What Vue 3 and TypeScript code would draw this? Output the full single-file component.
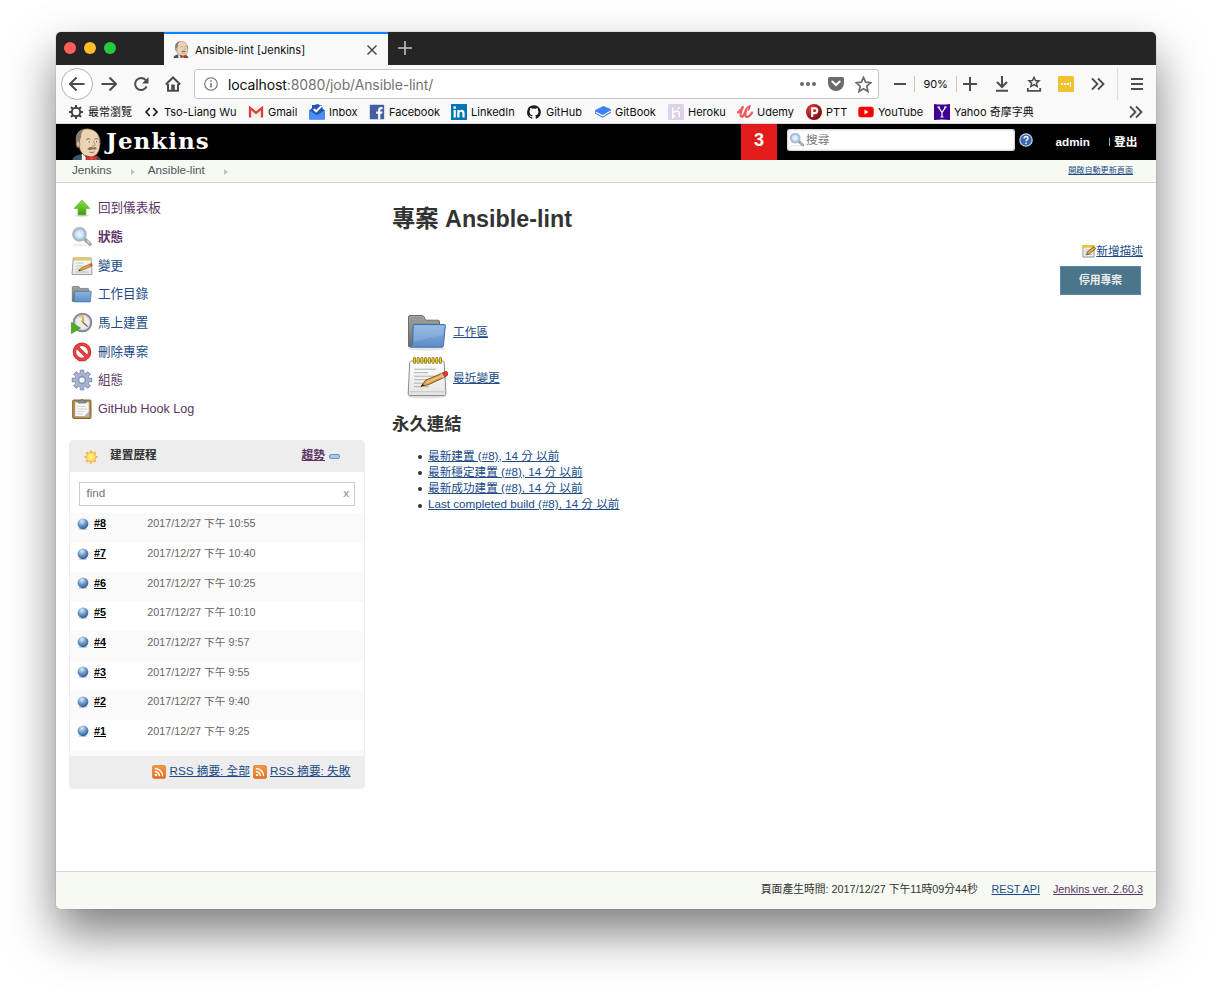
<script setup lang="ts">
interface Bookmark {
  icon: string
  label: string
}
interface Task {
  icon: string
  label: string
  visited?: boolean
  current?: boolean
}
interface Build {
  id: string
  time: string
}

const bookmarks: Bookmark[] = [
  { icon: 'b-gear', label: '最常瀏覽' },
  { icon: 'b-code', label: 'Tso-Liang Wu' },
  { icon: 'b-gmail', label: 'Gmail' },
  { icon: 'b-inbox', label: 'Inbox' },
  { icon: 'b-facebook', label: 'Facebook' },
  { icon: 'b-linkedin', label: 'LinkedIn' },
  { icon: 'b-github', label: 'GitHub' },
  { icon: 'b-gitbook', label: 'GitBook' },
  { icon: 'b-heroku', label: 'Heroku' },
  { icon: 'b-udemy', label: 'Udemy' },
  { icon: 'b-ptt', label: 'PTT' },
  { icon: 'b-youtube', label: 'YouTube' },
  { icon: 'b-yahoo', label: 'Yahoo 奇摩字典' },
]

const tasks: Task[] = [
  { icon: 't-up', label: '回到儀表板', visited: true },
  { icon: 't-search', label: '狀態', visited: true, current: true },
  { icon: 't-notes', label: '變更' },
  { icon: 't-folder', label: '工作目錄' },
  { icon: 't-clock', label: '馬上建置' },
  { icon: 't-forbid', label: '刪除專案' },
  { icon: 't-gear', label: '組態', visited: true },
  { icon: 't-clip', label: 'GitHub Hook Log', visited: true },
]

const builds: Build[] = [
  { id: '#8', time: '2017/12/27 下午 10:55' },
  { id: '#7', time: '2017/12/27 下午 10:40' },
  { id: '#6', time: '2017/12/27 下午 10:25' },
  { id: '#5', time: '2017/12/27 下午 10:10' },
  { id: '#4', time: '2017/12/27 下午 9:57' },
  { id: '#3', time: '2017/12/27 下午 9:55' },
  { id: '#2', time: '2017/12/27 下午 9:40' },
  { id: '#1', time: '2017/12/27 下午 9:25' },
]

const permalinks: string[] = [
  '最新建置 (#8), 14 分 以前',
  '最新穩定建置 (#8), 14 分 以前',
  '最新成功建置 (#8), 14 分 以前',
  'Last completed build (#8), 14 分 以前',
]
</script>

<template>
  <svg class="sprite" width="0" height="0" aria-hidden="true">
    <defs>
      <linearGradient id="g-green" x1="0" y1="0" x2="0" y2="1">
        <stop offset="0" stop-color="#8be04a" /><stop offset="1" stop-color="#3f9c0c" />
      </linearGradient>
      <linearGradient id="g-blue" x1="0" y1="0" x2="0" y2="1">
        <stop offset="0" stop-color="#8db4e0" /><stop offset="1" stop-color="#5b8dc9" />
      </linearGradient>
      <linearGradient id="g-grey" x1="0" y1="0" x2="0" y2="1">
        <stop offset="0" stop-color="#a5a5a2" /><stop offset="1" stop-color="#6a6c6a" />
      </linearGradient>
      <linearGradient id="g-paper" x1="0" y1="0" x2="0" y2="1">
        <stop offset="0" stop-color="#ffffff" /><stop offset="1" stop-color="#e4e4e2" />
      </linearGradient>
      <linearGradient id="g-rss" x1="0" y1="0" x2="0" y2="1">
        <stop offset="0" stop-color="#f39a4a" /><stop offset="1" stop-color="#e26a16" />
      </linearGradient>
      <radialGradient id="g-ball" cx=".4" cy=".28" r=".75">
        <stop offset="0" stop-color="#e2edf8" /><stop offset=".5" stop-color="#6d98cb" /><stop offset="1" stop-color="#2a5898" />
      </radialGradient>
      <radialGradient id="g-sun"><stop offset="0" stop-color="#fff8b0" /><stop offset="1" stop-color="#fdd648" /></radialGradient>
      <radialGradient id="g-ptt" cx=".35" cy=".3" r=".8"><stop offset="0" stop-color="#d84040" /><stop offset="1" stop-color="#7c0307" /></radialGradient>
      <radialGradient id="g-lens"><stop offset="0" stop-color="#f2f9ff" /><stop offset="1" stop-color="#a9cdf0" /></radialGradient>
    </defs>

    <symbol id="butler" viewBox="0 0 28 32">
      <path d="M0 32c0-4 3-5.500 8-6.500l9 1.500c6-.5 10 0 11 5z" fill="#33566b" />
      <path d="M9 24l5 5 6-3v6H9z" fill="#f4f4f0" />
      <path d="M3.500 13.500C2.500 5 7.500.8 14 .8 21.500.8 27.200 6 26.700 15c-.3 8-3 13-10 13-5.500 0-9-4-10-9-2 .5-3.700-1-3.200-5.500z" fill="#eed3b2" stroke="#5a4a3e" stroke-width=".7" />
      <path d="M3.500 14C2 6 6.500 1 11.500 1.200 9.200 3 8 5.500 8.300 9c-.8 1-1 3-1.400 5-1-1.600-2.800-1.200-3.400 0z" fill="#827f79" />
      <path d="M3.800 14c1-1.500 2.700-1 3.200.6.3 1.500 0 3-.6 4-2.300-.1-2.800-2.600-2.600-4.600z" fill="#e3b995" stroke="#5a4a3e" stroke-width=".5" />
      <path d="M25.300 8c1.500 1.700 1.900 4.500 1.400 7l-1-2z" fill="#827f79" />
      <path d="M13.200 11.500c1-1.300 3-1.400 4-.3M21.200 11c1-1 2.600-1 3.400.1" fill="none" stroke="#5a4a3e" stroke-width=".8" />
      <circle cx="15.700" cy="13.500" r="1.300" fill="#fff" /><circle cx="22.900" cy="13.300" r="1.200" fill="#fff" />
      <circle cx="16" cy="13.600" r=".7" fill="#333" /><circle cx="23.100" cy="13.400" r=".7" fill="#333" />
      <path d="M20.200 12.500c1 2.300 2.200 3.800 1 4.800-.8.700-2 .4-2.600 0" fill="none" stroke="#a07c60" stroke-width=".8" />
      <path d="M14.200 20.500c2-2.600 4-2.500 5.500-1.500 1.800-.8 3.500-.2 4 1.200-1.500 1-3 .8-4 .3-1.500 1-3.700 1-5.500 0z" fill="#7d6f5e" />
      <path d="M16.200 23.300c1.800.8 3.600.7 5-.3" fill="none" stroke="#9a5a4a" stroke-width=".8" />
      <path d="M13 26.800l5.500 2 5.500-2.300V32l-5.500-1.500L13 32z" fill="#d33833" stroke="#6c1110" stroke-width=".5" />
      <circle cx="18.500" cy="29.600" r="1.400" fill="#ef3d3a" />
    </symbol>

    <symbol id="b-gear" viewBox="0 0 16 16">
      <g fill="none" stroke="#3e3e3e"><circle cx="8" cy="8" r="4.200" stroke-width="1.900" />
      <path d="M8 1v2.500M8 12.500V15M1 8h2.500M12.500 8H15M3.050 3.050l1.800 1.800M11.150 11.150l1.800 1.800M3.050 12.950l1.800-1.800M11.150 4.850l1.800-1.800" stroke-width="2" /></g>
    </symbol>
    <symbol id="b-code" viewBox="0 0 16 16"><path d="M5.800 4L2 8l3.800 4M9.200 4L13 8l-3.800 4" fill="none" stroke="#111" stroke-width="1.600" /></symbol>
    <symbol id="b-gmail" viewBox="0 0 16 16">
      <path d="M1 3h14v10.500H1z" fill="#f1ecec" /><path d="M2 13.500V4l6 4.800L14 4v9.500" fill="none" stroke="#d9453a" stroke-width="2.300" />
    </symbol>
    <symbol id="b-inbox" viewBox="0 0 16 16">
      <path d="M0 6.500L3 4V1h10v3l3 2.500v8a1 1 0 0 1-1 1H1a1 1 0 0 1-1-1z" fill="#2f66c8" />
      <path d="M3 1.500L9 0l4.500 3v6L8 12 3 9z" fill="#2455ae" />
      <path d="M0 6.500L8 11l8-4.500v8a1 1 0 0 1-1 1H1a1 1 0 0 1-1-1z" fill="#4c8df5" />
      <path d="M4.700 5l2.400 2.500L12.500 2" fill="none" stroke="#fff" stroke-width="1.900" />
    </symbol>
    <symbol id="b-facebook" viewBox="0 0 16 16">
      <rect x=".8" y=".8" width="14.400" height="14.400" rx=".8" fill="#4460a0" />
      <path d="M11.300 15.200V9.800h1.900l.3-2.200h-2.200V6.300c0-.7.300-1.100 1.200-1.100h1.100v-2c-3-.4-4.500.7-4.500 2.900v1.500H7.200v2.200h1.900v5.400z" fill="#fff" />
    </symbol>
    <symbol id="b-linkedin" viewBox="0 0 16 16">
      <rect width="16" height="16" fill="#0177b5" /><circle cx="3.700" cy="3.600" r="1.300" fill="#fff" />
      <path d="M2.600 6h2.200v7.400H2.600zM6.300 6h2.100v1c1.300-1.900 5.200-1.500 5.200 2v4.400h-2.200V9.500c0-2.300-2.900-2.100-2.900 0v3.900H6.300z" fill="#fff" />
    </symbol>
    <symbol id="b-github" viewBox="0 0 16 16">
      <path d="M8 1.200a7 7 0 0 0-2.200 13.600c.35.070.48-.15.480-.33v-1.200c-1.950.42-2.360-.94-2.360-.94-.32-.8-.78-1.030-.78-1.030-.64-.43.050-.42.050-.42.700.05 1.070.72 1.070.72.630 1.070 1.640.76 2.040.58.060-.45.240-.76.440-.94-1.550-.18-3.190-.78-3.190-3.460 0-.76.270-1.390.720-1.880-.07-.18-.31-.89.070-1.850 0 0 .59-.19 1.920.72a6.700 6.700 0 0 1 3.500 0c1.340-.91 1.920-.72 1.920-.72.380.96.140 1.670.07 1.850.45.490.72 1.120.72 1.880 0 2.690-1.640 3.280-3.200 3.450.25.220.47.650.47 1.300v1.940c0 .19.130.41.480.34A7 7 0 0 0 8 1.200z" fill="#191717" />
    </symbol>
    <symbol id="b-gitbook" viewBox="0 0 16 16">
      <path d="M0 6.500L8.500 2.500 16 5.800v3L7.700 13.800 0 9.500z" fill="#3d7df0" /><path d="M1 8.300l6.700 3.400 8-4.800" fill="none" stroke="#fff" stroke-width="1.200" />
      <path d="M0 6.200L8.500 2 16 5.300 7.700 10z" fill="#3f80f5" />
    </symbol>
    <symbol id="b-heroku" viewBox="0 0 16 16">
      <rect width="16" height="16" rx="1.500" fill="#ddd0e9" />
      <path d="M4.700 3v5.500c4-2 6.500-1.300 6.500.8v4M4.700 10.500v3l1.800-1.500zM11 3c-.1 1-.5 1.700-1 2.300" fill="none" stroke="#fff" stroke-width="1.500" />
    </symbol>
    <symbol id="b-udemy" viewBox="0 0 16 16">
      <path d="M.8 8.500C3 7 4.800 4.800 5.800 3 4.300 6.500 2.800 10.500 4 12.300c2 1.600 4-3.300 5.300-6.800C8.500 8.500 7.500 11.500 9 12.600c1.900.7 4.300-1.200 6-4" fill="none" stroke="#eb5c5d" stroke-width="2.300" stroke-linecap="round" stroke-linejoin="round" />
      <path d="M9.300 5.500q1-3 3.700-3.500-.5 2.500-2 4.500" fill="none" stroke="#eb5c5d" stroke-width="1.500" />
    </symbol>
    <symbol id="b-ptt" viewBox="0 0 16 16">
      <circle cx="8" cy="8" r="8" fill="url(#g-ptt)" /><path d="M6.200 13V4.300h2.600a2.300 2.300 0 0 1 0 4.800H6.500" fill="none" stroke="#fff" stroke-width="2.100" />
    </symbol>
    <symbol id="b-youtube" viewBox="0 0 16 16"><rect x=".3" y="2.700" width="15.400" height="10.600" rx="2.800" fill="#f00" /><path d="M6.500 5.500v5l4-2.500z" fill="#fff" /></symbol>
    <symbol id="b-yahoo" viewBox="0 0 16 16">
      <path d="M0 0q8 1 16 0v16q-8-1-16 0z" fill="#400090" /><path d="M4.500 3.300L8 8.500l3.500-5.200M8 8v5M3.300 3h2.800M10 3h2.800M6.500 13h3" fill="none" stroke="#fff" stroke-width="1.200" />
    </symbol>

    <symbol id="t-up" viewBox="0 0 22 22">
      <ellipse cx="11" cy="18.700" rx="7" ry="1.300" fill="#ddd" /><path d="M11 3L3 11.500h4v6.500h8v-6.500h4z" fill="url(#g-green)" stroke="#7cbd54" stroke-width=".8" />
    </symbol>
    <symbol id="t-search" viewBox="0 0 22 22">
      <ellipse cx="9" cy="19" rx="8" ry="1.400" fill="#eee" /><path d="M14 13.500l5 4.500" stroke="#9a9c98" stroke-width="3.600" stroke-linecap="round" /><path d="M15.500 14.500l3.500 3.200" stroke="#d8d8d6" stroke-width="1.200" />
      <circle cx="8.500" cy="8.300" r="6.600" fill="url(#g-lens)" stroke="#b4b7bc" stroke-width="1.600" /><circle cx="8.500" cy="8.300" r="5.400" fill="none" stroke="#8baedb" stroke-width=".7" />
    </symbol>
    <symbol id="t-notes" viewBox="0 0 22 22">
      <path d="M2.300 3h17.900L21 19.500H1z" fill="url(#g-paper)" stroke="#a0a09c" /><path d="M2.500 2.300h17v2.200h-17z" fill="#e3c867" /><path d="M2.500 5h17" stroke="#a58a35" stroke-width=".6" />
      <path d="M4.500 8h8M4.500 11h7M4.500 14h5M4.500 17h13" stroke="#bcbcb8" stroke-width=".9" />
      <path d="M7.500 16l3-3.400 9-3.800 1.500 2.300-9 3.900z" fill="#dba051" stroke="#8c5e1c" stroke-width=".6" /><path d="M18.500 9l2-1 1.200 2.500-1.700.9z" fill="#e2442b" /><path d="M7.500 16l1.300-1.600.9 1z" fill="#222" />
    </symbol>
    <symbol id="t-folder" viewBox="0 0 22 22">
      <path d="M1.300 18.500V4.300q0-.9.900-.9h5.600l1.300 2h7.700q.9 0 .9.900v12.200z" fill="url(#g-grey)" stroke="#6a6c6a" stroke-width=".7" />
      <path d="M3.800 8.300h15.900q.7 0 .6.700l-1 9.900H3.200z" fill="url(#g-blue)" stroke="#4a7ab5" stroke-width=".8" />
    </symbol>
    <symbol id="t-clock" viewBox="0 0 22 22">
      <circle cx="11.500" cy="10.500" r="8.800" fill="#efeee6" stroke="#858896" stroke-width="2" /><circle cx="11.500" cy="10.500" r="7.200" fill="none" stroke="#c8cad0" stroke-width=".9" />
      <path d="M12 5.500v5l4.500 4" stroke="#6c6f76" stroke-width="1.300" fill="none" /><path d="M8 4.500h3.500l1 4-2.500 1" stroke="#dcb845" stroke-width="1.500" fill="none" />
      <path d="M.5 10.500L9.500 16l-9 5.500z" fill="#4fae22" stroke="#3f9018" stroke-width=".7" />
    </symbol>
    <symbol id="t-forbid" viewBox="0 0 22 22">
      <ellipse cx="11" cy="19.900" rx="7" ry="1.200" fill="#e5e5e5" /><circle cx="11" cy="10.900" r="7.600" fill="#fff" stroke="#c22" stroke-width="3.400" /><path d="M5.800 5.700l10.400 10.400" stroke="#c22" stroke-width="3.400" />
      <circle cx="11" cy="10.900" r="7.600" fill="none" stroke="#e24444" stroke-width="2.300" /><path d="M5.800 5.700l10.400 10.400" stroke="#e24444" stroke-width="2.300" />
    </symbol>
    <symbol id="t-gear" viewBox="0 0 22 22">
      <g stroke="#7584a8" stroke-width="4.400"><path d="M11 .8v20.400M.8 11h20.400M3.800 3.800l14.400 14.400M3.800 18.200L18.200 3.800" /></g>
      <circle cx="11" cy="11" r="7.500" fill="#7584a8" />
      <g stroke="#a9b5d3" stroke-width="3.200"><path d="M11 1.500v19M1.500 11h19M4.300 4.300l13.400 13.400M4.300 17.700L17.700 4.300" /></g>
      <circle cx="11" cy="11" r="6.900" fill="#a9b5d3" /><circle cx="11" cy="11" r="4.200" fill="#8797ba" /><circle cx="11" cy="11" r="2.600" fill="#fff" />
    </symbol>
    <symbol id="t-clip" viewBox="0 0 22 22">
      <rect x="1.700" y="2" width="18.300" height="18.500" rx="1" fill="#b98a4a" stroke="#86642c" /><path d="M4 4h14v14.500H4z" fill="#f6f6f4" stroke="#999" stroke-width=".5" />
      <path d="M18 13.500l-5 5h5z" fill="#b4b4b0" /><path d="M6 8.500h9M6 11h10M6 13.500h7M6 16h6" stroke="#d0d0cc" stroke-width=".9" /><path d="M7 5V2.500h2.500a1.600 1.600 0 0 1 3 0H15V5z" fill="#8b8d8a" stroke="#666" stroke-width=".7" />
    </symbol>

    <symbol id="m-folder" viewBox="0 0 42 42">
      <ellipse cx="21" cy="37.500" rx="19" ry="2.200" fill="#e4e4e4" />
      <path d="M2.500 35.500V6Q2.500 4.500 4 4.500h12q1.500 0 2.200 1.500l1.300 3.200H32q1.500 0 1.500 1.500v22z" fill="url(#g-grey)" stroke="#6b6d6b" />
      <path d="M4 7h12M4 10h13M4 12.500h28" stroke="#8a8c8a" stroke-width=".8" />
      <path d="M7.200 14.700q.1-1.200 1.300-1.200h29.800q1.200 0 1.100 1.200l-2 20q-.2 1.500-1.700 1.500H4.200q2-.6 2.100-2z" fill="url(#g-blue)" stroke="#4272ae" />
      <path d="M8.700 15h29l-1 9.500c-12 .5-17 4.500-28.900 6z" fill="#fff" opacity=".12" />
    </symbol>
    <symbol id="m-notes" viewBox="0 0 42 44">
      <ellipse cx="21" cy="40.500" rx="19" ry="1.800" fill="#dedede" />
      <path d="M5.500 5h31q1.500 0 1.700 1.500l1.700 31.300q0 1.700-1.500 1.700H3.600q-1.500 0-1.400-1.700L3.700 6.500Q3.900 5 5.500 5z" fill="url(#g-paper)" stroke="#8b8d89" />
      <path d="M3 35.800h36.500" stroke="#c4c4c2" />
      <path d="M8 13.200h22M8 16.700h14M8 20.200h20M8 23.700h16M8 27.200h12M8 30.700h15" stroke="#b0b0ac" stroke-width="1" />
      <path d="M8.500 2.500v3.700M12.200 2.500v3.700M15.900 2.500v3.700M19.600 2.500v3.700M23.300 2.500v3.700M27 2.500v3.700M30.700 2.500v3.700M34.400 2.500v3.700" stroke="#85700f" stroke-width="3" stroke-linecap="round" />
      <path d="M8.500 2.500v3.700M12.200 2.500v3.700M15.900 2.500v3.700M19.600 2.500v3.700M23.300 2.500v3.700M27 2.500v3.700M30.700 2.500v3.700M34.400 2.500v3.700" stroke="#ecd23c" stroke-width="1.500" stroke-linecap="round" />
      <path d="M15 30.300l4.500-6L36.500 17l2.600 4-17 7.800z" fill="#dba34f" stroke="#7c4f10" stroke-width=".9" /><path d="M20.500 26.500l17-7.500" stroke="#f4cf8c" stroke-width="1.200" />
      <path d="M36 17.200l3.300-1.600q1.700-.6 2.400.9t-.4 2.900l-2.800 1.600z" fill="#e23a33" stroke="#97130f" stroke-width=".7" /><path d="M34.200 18l1.800-.8 2.600 3.800-2 1z" fill="#c8c8c6" /><path d="M15 30.300l1.700-2.300 1.600 1.500z" fill="#111" />
    </symbol>
    <symbol id="rss" viewBox="0 0 14 14">
      <rect x=".4" y=".4" width="13.200" height="13.200" rx="2" fill="url(#g-rss)" stroke="#e27a2c" stroke-width=".8" /><circle cx="4" cy="10" r="1.300" fill="#fff" />
      <path d="M2.800 6.500a4.700 4.700 0 0 1 4.700 4.700M2.800 3.400a7.800 7.800 0 0 1 7.800 7.800" fill="none" stroke="#fff" stroke-width="1.500" />
    </symbol>
    <symbol id="chev" viewBox="0 0 16 16"><path d="M2 2.500L7.500 8 2 13.500M8 2.500L13.500 8 8 13.500" fill="none" stroke="#4c4c4c" stroke-width="1.800" /></symbol>
  </svg>

  <div class="desktop">
    <div class="window">
      <div class="tabbar">
        <div class="lights"><i class="red"></i><i class="amber"></i><i class="green"></i></div>
        <div class="tab">
          <svg class="favicon" width="16" height="17"><use href="#butler" /></svg>
          <span class="tab-title">Ansible-lint [Jenkins]</span>
          <svg width="12" height="12" viewBox="0 0 12 12"><path d="M1.500 1.500l9 9M10.500 1.500l-9 9" stroke="#4c4c4c" stroke-width="1.500" /></svg>
        </div>
        <svg class="new-tab" width="16" height="16" viewBox="0 0 16 16"><path d="M8 1v14M1 8h14" stroke="#c4c4c4" stroke-width="1.600" /></svg>
      </div>

      <div class="toolbar">
        <span class="tool back"><svg width="16" height="16" viewBox="0 0 16 16"><path d="M15.500 8H1.500M7.500 1.500L1 8l6.500 6.500" /></svg></span>
        <span class="tool"><svg width="16" height="16" viewBox="0 0 16 16"><path d="M.5 8h14M8.500 1.500L15 8l-6.500 6.500" /></svg></span>
        <span class="tool"><svg width="16" height="16" viewBox="0 0 16 16"><path d="M13.600 10.500A6 6 0 1 1 12.600 4" /><path class="solid" d="M15.500 1v6.500H9z" /></svg></span>
        <span class="tool"><svg width="16" height="16" viewBox="0 0 16 16"><path d="M.8 8.500L8 1.500l7.200 7M3 8v6.800h10V8" /><path class="solid" d="M6.200 14.500V9.200q0-.8.800-.8h2q.8 0 .8.800v5.300z" /></svg></span>
        <div class="urlbar">
          <svg class="info" width="14" height="14" viewBox="0 0 14 14"><circle cx="7" cy="7" r="6.300" fill="none" stroke="#6a6a6a" stroke-width="1.100" /><path d="M7 6v4.500M7 3.200v1.500" stroke="#6a6a6a" stroke-width="1.500" /></svg>
          <span class="url">localhost<em>:8080/job/Ansible-lint/</em></span>
          <svg class="dots" width="16" height="4" viewBox="0 0 16 4"><circle cx="2" cy="2" r="2" /><circle cx="8" cy="2" r="2" /><circle cx="14" cy="2" r="2" /></svg>
          <svg class="pocket" width="16" height="14" viewBox="0 0 16 14"><path d="M1.500 0h13Q16 0 16 1.500V6a8 8 0 0 1-16 0V1.500Q0 0 1.500 0z" fill="#6b6b6b" /><path d="M4.300 4.500L8 8l3.700-3.500" fill="none" stroke="#fff" stroke-width="2" stroke-linecap="round" /></svg>
          <svg class="star" width="17" height="17" viewBox="0 0 17 17"><path d="M8.500 1.300l2.100 4.900 5.200.5-4 3.500 1.200 5.300-4.500-2.800L4 15.500l1.200-5.300-4-3.500 5.200-.5z" fill="none" stroke="#6b6b6b" stroke-width="1.700" /></svg>
        </div>
        <span class="zoom-btn minus"><svg width="14" height="16" viewBox="0 0 14 16"><path d="M1 8h12" /></svg></span>
        <span class="zoom-pct">90%</span>
        <span class="zoom-btn plus"><svg width="14" height="16" viewBox="0 0 14 16"><path d="M0 8h14M7 1v14" /></svg></span>
        <span class="tool"><svg width="16" height="16" viewBox="0 0 16 16"><path d="M8 0v11M3 6l5 5 5-5M2 14.800h12" /></svg></span>
        <span class="tool"><svg width="16" height="16" viewBox="0 0 16 16"><path d="M8 1.300l1.500 3.200 3.500.3-2.600 2.300.8 3.400L8 8.700l-3.200 1.800.8-3.400L3 4.800l3.500-.3z" stroke-width="1.500" /><path d="M1.800 12v2.800h12.400V12" stroke-width="1.800" /></svg></span>
        <span class="tool"><i class="pass"><b></b><b></b><b></b><u></u></i></span>
        <span class="tool"><svg width="16" height="16"><use href="#chev" /></svg></span>
        <span class="tool menu"><svg width="16" height="16" viewBox="0 0 16 16"><path d="M2 3h12M2 8h12M2 13h12" /></svg></span>
      </div>

      <div class="bookmarks">
        <span v-for="b in bookmarks" :key="b.label" class="bookmark">
          <svg width="16" height="16"><use :href="'#' + b.icon" /></svg><span>{{ b.label }}</span>
        </span>
        <svg width="16" height="16"><use href="#chev" /></svg>
      </div>

      <header class="masthead">
        <svg class="logo" width="30" height="33" preserveAspectRatio="none"><use href="#butler" /></svg>
        <span class="wordmark">Jenkins</span>
        <span class="alerts">3</span>
        <div class="search">
          <svg width="16" height="16" viewBox="0 0 22 22"><use href="#t-search" /></svg><span>搜尋</span>
        </div>
        <svg class="help" width="14" height="14" viewBox="0 0 14 14"><circle cx="7" cy="7" r="6.200" fill="#3d68ae" stroke="#c3d2ea" stroke-width="1.200" /><path d="M5 5.500c0-2.800 4-2.500 4-.2 0 1.500-2 1.400-2 3M7 9.400v1.500" fill="none" stroke="#fff" stroke-width="1.400" /></svg>
        <b class="user">admin</b>
        <i class="divider"></i>
        <b class="logout">登出</b>
      </header>

      <nav class="crumbs">
        <span>Jenkins</span><i class="arrow"></i><span class="crumb-job">Ansible-lint</span><i class="arrow"></i>
        <a class="refresh">開啟自動更新頁面</a>
      </nav>

      <div class="body">
        <aside class="side">
          <a v-for="t in tasks" :key="t.label" class="task" :class="{ visited: t.visited, current: t.current }">
            <svg width="22" height="22"><use :href="'#' + t.icon" /></svg><span>{{ t.label }}</span>
          </a>

          <section class="history">
            <div class="history-head">
              <svg width="16" height="16" viewBox="0 0 16 16"><path d="M8 1.500V3M8 13v1.500M1.500 8H3M13 8h1.500M3.400 3.400l1.200 1.200M11.400 11.400l1.200 1.200M3.400 12.600l1.200-1.200M11.400 4.600l1.200-1.200" stroke="#fbb040" stroke-width="2.200" /><circle cx="8" cy="8" r="4.800" fill="url(#g-sun)" stroke="#f9b040" stroke-width=".8" /></svg>
              <b>建置歷程</b>
              <a class="trend">趨勢</a>
              <i class="collapse"></i>
            </div>
            <div class="find"><span>find</span><span class="clear">x</span></div>
            <div class="rows">
              <div v-for="b in builds" :key="b.id" class="build">
                <svg width="12" height="12" viewBox="0 0 12 12"><ellipse cx="6" cy="11" rx="4.500" ry="1" fill="#ccc" /><circle cx="6" cy="5.800" r="5.400" fill="url(#g-ball)" /></svg>
                <b>{{ b.id }}</b><span>{{ b.time }}</span>
              </div>
            </div>
            <div class="history-foot">
              <svg width="14" height="14"><use href="#rss" /></svg><a>RSS 摘要: 全部</a>
              <svg width="14" height="14"><use href="#rss" /></svg><a>RSS 摘要: 失敗</a>
            </div>
          </section>
        </aside>

        <main class="main">
          <h1>專案 Ansible-lint</h1>
          <div class="describe">
            <svg width="14" height="14" viewBox="0 0 14 14"><path d="M1 1.500h11V13H1z" fill="#f3f3f0" stroke="#90908c" /><path d="M.5 1h12v2.800H.5z" fill="#e8c33e" /><path d="M3 6h5M3 8h3M3 10.500h7" stroke="#bbb" /><path d="M4.500 11l1-3.200L12 2.600l1.700 2-6.200 5.200z" fill="#e2ad4c" stroke="#6e4e18" stroke-width=".8" /></svg><a>新增描述</a>
          </div>
          <button class="disable">停用專案</button>
          <div class="feature folder"><svg width="42" height="42"><use href="#m-folder" /></svg><a>工作區</a></div>
          <div class="feature notes"><svg width="42" height="44"><use href="#m-notes" /></svg><a>最近變更</a></div>
          <h2>永久連結</h2>
          <ul>
            <li v-for="p in permalinks" :key="p"><a>{{ p }}</a></li>
          </ul>
        </main>
      </div>

      <footer class="foot">
        <span class="generated">頁面產生時間: 2017/12/27 下午11時09分44秒</span><a>REST API</a><a class="visited">Jenkins ver. 2.60.3</a>
      </footer>
    </div>
  </div>
</template>

<style>
body {
  margin: 0;
  background: #fff;
  overflow: hidden;
}
</style>

<style scoped>
* {
  box-sizing: border-box;
}
.sprite {
  position: absolute;
}
svg {
  flex: none;
  display: block;
}
.desktop {
  height: 989px;
  padding: 32px 56px;
  overflow: hidden;
  background: #fff;
}
.window {
  width: 1100px;
  height: 877px;
  border-radius: 5px;
  overflow: hidden;
  background: #fff;
  display: flex;
  flex-direction: column;
  font: 11.7px/16px "Liberation Sans", "Noto Sans CJK TC", sans-serif;
  color: #333;
  white-space: nowrap;
  box-shadow: 0 0 1px rgba(0, 0, 0, 0.5), 0 24px 48px rgba(0, 0, 0, 0.5);
}
.tabbar,
.toolbar,
.bookmarks {
  display: flex;
  align-items: center;
  flex: none;
  background: #f9f9fa;
  font-family: Inter, "Noto Sans CJK TC", sans-serif;
  color: #0c0c0d;
}
.tabbar {
  height: 33px;
  background: #252525;
}
.lights {
  width: 108px;
  display: flex;
  gap: 8px;
  padding: 0 0 1px 8px;
}
.lights i {
  width: 12px;
  height: 12px;
  border-radius: 50%;
}
.red { background: #ff5f57; }
.amber { background: #ffbd2e; }
.green { background: #28c940; }
.tab {
  width: 224px;
  height: 33px;
  background: #f9f9fa;
  border-top: 2px solid #0a84ff;
  display: flex;
  align-items: center;
  padding: 0 10px 0 9px;
}
.tab-title {
  flex: 1;
  margin-left: 6px;
  font-size: 11px;
}
.new-tab {
  margin: 0 0 1px 9px;
}
.toolbar {
  height: 38px;
  padding-left: 5px;
}
.tool,
.zoom-btn {
  width: 32px;
  height: 32px;
  flex: none;
  display: flex;
  align-items: center;
  justify-content: center;
}
.tool svg,
.zoom-btn svg {
  fill: none;
  stroke: #4c4c4c;
  stroke-width: 2;
}
.tool .solid {
  fill: #4c4c4c;
  stroke: none;
}
.back {
  border: 1px solid #b4b4b4;
  border-radius: 50%;
  background: #fff;
}
.urlbar {
  width: 685px;
  height: 30px;
  margin: 0 7px 0 5px;
  border: 1px solid #c4c4c4;
  border-radius: 3px;
  background: #fff;
  display: flex;
  align-items: center;
  padding: 0 6px 0 9px;
}
.url {
  flex: 1;
  margin: 1px 0 0 10px;
  font-size: 14px;
  letter-spacing: -0.12px;
}
.url em {
  font-style: normal;
  color: #737373;
}
.dots { fill: #6b6b6b; }
.pocket { margin-left: 12px; }
.star { margin-left: 11px; }
.zoom-btn {
  height: 16px;
}
.minus { width: 29px; border-right: 1px solid #c8c8c8; }
.plus { width: 27px; border-left: 1px solid #c8c8c8; margin-right: 3px; }
.zoom-pct {
  width: 41px;
  text-align: center;
  font-size: 11px;
  letter-spacing: -0.2px;
}
.pass {
  width: 16px;
  height: 16px;
  border-radius: 1.5px;
  background: #f0c22f;
  display: flex;
  align-items: center;
  justify-content: center;
  gap: 1px;
}
.pass b {
  width: 2px;
  height: 2px;
  background: #fff;
}
.pass u {
  width: 1px;
  height: 5px;
  background: #fff;
}
.menu {
  width: 39px;
  height: 32px;
  margin-left: 3px;
  border-left: 1px solid #dcdcdc;
}
.bookmarks {
  height: 21px;
  border-bottom: 1px solid #d8d8d8;
  display: grid;
  grid-template-columns: 76px 104px 61px 60px 82px 75px 69px 73px 69px 69px 52px 76px 138px 16px;
  padding: 0 0 3px 12px;
  font-size: 11px;
}
.bookmarks > svg {
  margin-left: 56px;
}
.bookmark {
  display: flex;
  align-items: center;
  gap: 4px;
}
.masthead {
  height: 36px;
  flex: none;
  display: flex;
  align-items: center;
  background: #000;
  color: #fff;
}
.logo {
  margin: 4px 0 0 16px;
}
.wordmark {
  width: 639px;
  height: 36px;
  margin-left: 4px;
  font: bold 23px/34px "DejaVu Serif", serif;
  letter-spacing: 1px;
}
.alerts {
  width: 36px;
  height: 36px;
  margin-left: -4px;
  background: #e31b1b;
  text-align: center;
  font: bold 18px/33px "Liberation Sans", sans-serif;
}
.search {
  width: 228px;
  height: 22px;
  margin: -4px 4px 0 10px;
  padding: 0 2px;
  border-radius: 3px;
  background: #fff;
  box-shadow: inset 0 0 3px #999;
  display: flex;
  align-items: center;
  gap: 1px;
  color: #777;
}
.search span {
  margin-top: -1px;
}
.help {
  margin-top: -4px;
}
.user {
  width: 53px;
  margin-left: 22.5px;
}
.divider {
  width: 1px;
  height: 8px;
  background: #aaa;
}
.logout {
  margin-left: 4.5px;
}
.crumbs {
  height: 23px;
  flex: none;
  display: flex;
  align-items: center;
  padding: 0 23px 2px 16px;
  background: #f6faf2;
  border-bottom: 1px solid #d3d7cf;
  color: #4d545d;
}
.arrow {
  border: 3.5px solid transparent;
  border-left: 4px solid #c0c4c0;
  border-right: 0;
  margin: 3px 13px 0 19px;
}
a {
  color: #204a87;
  text-decoration: underline;
}
.visited,
.trend {
  color: #5c3566;
}
.refresh {
  margin: 2px 0 0 auto;
  font-size: 8.1px;
}
.body {
  flex: 1;
  display: flex;
}
.side {
  width: 309px;
  padding: 11px 0 0 13px;
}
.task {
  display: flex;
  align-items: center;
  gap: 5px;
  height: 28.7px;
  padding-left: 2px;
  font-size: 12.55px;
  text-decoration: none;
}
.current {
  font-weight: bold;
}
.history {
  width: 296px;
  height: 349px;
  margin-top: 16.4px;
  border: 1px solid #ededed;
  border-radius: 4px;
  overflow: hidden;
}
.history-head {
  height: 31px;
  background: #ededed;
  display: flex;
  align-items: center;
  padding: 0 24px 2px 13px;
}
.history-head svg {
  margin-top: 3px;
}
.history-head b {
  flex: 1;
  margin-left: 11px;
}
.trend {
  font-weight: bold;
}
.collapse {
  width: 11px;
  height: 5px;
  margin: 3px 0 0 4px;
  border: 1.5px solid #6c97c6;
  border-radius: 2px;
  background: #a9c7e8;
}
.find {
  height: 24px;
  margin: 10px 9px 7px;
  padding: 0 5px 2px 6.5px;
  border: 1px solid #ccc;
  display: flex;
  align-items: center;
  justify-content: space-between;
  color: #777;
}
.clear {
  color: #888;
}
.rows {
  height: 243px;
  background: #fafafa;
}
.build {
  height: 29.64px;
  display: flex;
  padding: 2.5px 0 0 7px;
  background: #fff;
  font-size: 10.75px;
  color: #666;
}
.build:nth-child(odd) {
  background: #fafafa;
}
.build svg {
  margin-top: 2.5px;
}
.build b {
  width: 53.3px;
  margin-left: 5px;
  color: #000;
  text-decoration: underline;
}
.history-foot {
  height: 33px;
  background: #ededed;
  display: flex;
  align-items: center;
  justify-content: flex-end;
  gap: 3px;
  padding: 0 13.5px 2px 0;
}
.history-foot svg {
  margin-top: 2px;
}
.main {
  flex: 1;
  padding: 20px 13px 0 27px;
  display: flex;
  flex-direction: column;
  align-items: flex-start;
}
h1 {
  margin: 0;
  font-size: 23.3px;
  line-height: 32px;
}
.describe {
  align-self: flex-end;
  display: flex;
  align-items: center;
  margin-top: 8px;
}
.disable {
  align-self: flex-end;
  width: 81px;
  height: 29px;
  margin: 7px 2px 0 0;
  padding: 0 0 3px;
  border: 1px solid #5a8aa3;
  background: #4b758b;
  color: #eee;
  font: bold 10.8px "Liberation Sans", "Noto Sans CJK TC", sans-serif;
}
.feature {
  display: flex;
  align-items: center;
  gap: 5px;
  margin-left: 14px;
}
.folder {
  height: 42px;
  margin-top: 16px;
}
.notes {
  height: 44px;
  margin-top: 3px;
}
h2 {
  margin: 11.5px 0 0;
  font-size: 17.4px;
  line-height: 24px;
}
ul {
  margin: 12px 0 0;
  padding-left: 36px;
  list-style: none;
}
li {
  display: flex;
  align-items: center;
  height: 16.3px;
  line-height: 16.3px;
  font-size: 11.65px;
}
li::before {
  content: "";
  width: 4px;
  height: 4px;
  margin: 2px 6px 0 -10px;
  border-radius: 50%;
  background: #333;
}
.foot {
  height: 38px;
  flex: none;
  display: flex;
  align-items: center;
  justify-content: flex-end;
  gap: 13px;
  padding: 0 13px 3px 0;
  background: #f6faf2;
  border-top: 1px solid #d3d7cf;
  font-size: 10.8px;
}
.generated {
  margin-right: 0.7px;
}
</style>
